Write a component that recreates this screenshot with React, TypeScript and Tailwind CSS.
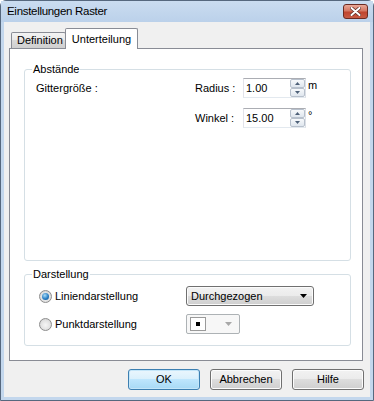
const btnFace =
  "bg-[linear-gradient(to_bottom,#f2f2f2_0%,#ebebeb_50%,#dddddd_50%,#cfcfcf_100%)]";

function Spinner() {
  return (
    <div className="flex w-[15px] flex-col">
      {["up", "down"].map((dir) => (
        <div
          key={dir}
          className="flex h-[9px] items-center justify-center rounded-[2px] border border-[#b7c0cc] bg-[linear-gradient(to_bottom,#f7f9fb,#dfe6ee)]"
        >
          <svg width="5" height="3" viewBox="0 0 5 3" aria-hidden>
            {dir === "up" ? (
              <path d="M0 3 L2.5 0 L5 3 Z" fill="#4d6078" />
            ) : (
              <path d="M0 0 L2.5 3 L5 0 Z" fill="#4d6078" />
            )}
          </svg>
        </div>
      ))}
    </div>
  );
}

function NumberField({ value, unit }: { value: string; unit: string }) {
  return (
    <div className="flex items-center">
      <div className="flex h-[20px] w-[63px] items-stretch border border-[#abadb3] border-b-[#e3e9ef] border-l-[#e2e3ea] border-r-[#dbdfe6] bg-white">
        <span className="flex flex-1 items-center pl-[2px]">{value}</span>
        <Spinner />
      </div>
      <span className="ml-[2px] self-start leading-[14px]">{unit}</span>
    </div>
  );
}

function Radio({ checked }: { checked?: boolean }) {
  return (
    <span className="flex h-[13px] w-[13px] items-center justify-center rounded-full border border-[#8d8d8d] bg-[radial-gradient(circle_at_50%_55%,#f6f6f6_0%,#e2e2e2_55%,#c4c4c4_100%)]">
      {checked ? (
        <span className="h-[7px] w-[7px] rounded-full bg-[radial-gradient(circle_at_40%_35%,#a8dcf8_0%,#2a7fc4_55%,#0c4a86_100%)]" />
      ) : null}
    </span>
  );
}

function Group({
  title,
  className,
  children,
}: {
  title: string;
  className: string;
  children: React.ReactNode;
}) {
  return (
    <div
      className={`relative w-[327px] rounded-[3px] border border-[#d5dfe5] ${className}`}
    >
      <span className="absolute -top-[7px] left-[7px] bg-white px-[1px] leading-[13px]">
        {title}
      </span>
      {children}
    </div>
  );
}

function DialogButton({ label, primary }: { label: string; primary?: boolean }) {
  return (
    <button
      type="button"
      className={
        primary
          ? "flex h-[21px] w-[72px] items-center justify-center rounded-[3px] border border-[#3c7fb1] bg-[linear-gradient(to_bottom,#eaf6fd_0%,#d9f0fc_50%,#bee6fd_50%,#a7d9f5_100%)] shadow-[inset_0_0_0_1px_#c4e6f9]"
          : `flex h-[21px] w-[72px] items-center justify-center rounded-[3px] border border-[#707070] ${btnFace} shadow-[inset_0_0_0_1px_#fcfcfc]`
      }
    >
      {label}
    </button>
  );
}

export default function App() {
  return (
    <div className="h-[401px] w-[374px] bg-white font-['Liberation_Sans',Arial,sans-serif] text-[11px] text-black">
      <div className="flex h-full flex-col rounded-t-[6px] border border-[#56687e] bg-[#c3d7ed] px-[3px] pb-[3px]">
        {/* title bar */}
        <div className="-mx-[3px] flex h-[21px] items-start justify-between bg-[linear-gradient(to_bottom,#cadcf0,#bbd1ea)] pl-[6px] pr-[5px]">
          <span className="mt-[4px] text-[11.5px] leading-[13px] tracking-[-0.3px]">
            Einstellungen Raster
          </span>
          <div className="mt-[3px] flex h-[15px] w-[25px] items-center justify-center rounded-[3px] border border-[#6b2b22] bg-[linear-gradient(to_bottom,#eaa897_0%,#d47763_45%,#c0452f_55%,#c75b45_100%)]">
            <svg width="11" height="9" viewBox="0 0 11 9" aria-hidden>
              <path
                d="M1.5 1 L9.5 8 M9.5 1 L1.5 8"
                stroke="#5b2a22"
                strokeWidth="3.4"
                strokeLinecap="round"
              />
              <path
                d="M1.5 1 L9.5 8 M9.5 1 L1.5 8"
                stroke="#ffffff"
                strokeWidth="2"
                strokeLinecap="round"
              />
            </svg>
          </div>
        </div>

        {/* client area */}
        <div className="flex flex-1 flex-col bg-[#f0f0f0] pl-[5px] pt-[6px]">
          {/* tabs */}
          <div className="flex h-[20px] items-end pl-[2px]">
            <div className="flex h-[16px] w-[55px] items-center rounded-t-[2px] border border-b-0 border-[#898c95] bg-[linear-gradient(to_bottom,#f3f3f3_0%,#e8e8e8_50%,#d9d9d9_50%,#cfcfcf_100%)] pl-[5px]">
              Definition
            </div>
            <div className="relative z-10 -mb-[1px] -ml-[1px] flex h-[21px] w-[73px] items-center justify-center rounded-t-[2px] border border-b-0 border-[#898c95] bg-white">
              Unterteilung
            </div>
          </div>

          {/* tab panel */}
          <div className="h-[313px] w-[354px] border border-[#898c95] bg-white pl-[14px] pt-[20px]">
            <Group title="Abstände" className="h-[192px] pl-[11px] pt-[8px]">
              <div className="flex h-[20px] items-center">
                <span className="w-[159px]">Gittergröße :</span>
                <span className="w-[48px]">Radius :</span>
                <NumberField value="1.00" unit="m" />
              </div>
              <div className="mt-[10px] flex h-[20px] items-center">
                <span className="w-[159px]" />
                <span className="w-[48px]">Winkel :</span>
                <NumberField value="15.00" unit="°" />
              </div>
            </Group>

            <Group title="Darstellung" className="mt-[13px] h-[72px] pl-[14px] pt-[11px]">
              <div className="flex h-[20px] items-center">
                <div className="flex w-[147px] items-center gap-[3px]">
                  <Radio checked />
                  <span>Liniendarstellung</span>
                </div>
                <div
                  className={`flex h-[20px] w-[128px] items-center justify-between rounded-[3px] border border-[#707070] ${btnFace} pl-[4px] pr-[6px] shadow-[inset_0_0_0_1px_#fbfbfb]`}
                >
                  <span>Durchgezogen</span>
                  <svg width="7" height="4" viewBox="0 0 7 4" aria-hidden>
                    <path d="M0 0 L7 0 L3.5 4 Z" fill="#000" />
                  </svg>
                </div>
              </div>
              <div className="mt-[8px] flex h-[20px] items-center">
                <div className="flex w-[147px] items-center gap-[3px]">
                  <Radio />
                  <span>Punktdarstellung</span>
                </div>
                <div className="flex h-[20px] w-[54px] items-center justify-between rounded-[2px] border border-[#adb2b5] bg-[#f7f7f7] pl-[3px] pr-[7px]">
                  <div className="flex h-[14px] w-[16px] items-center justify-center border border-[#9a9a9a] bg-white">
                    <span className="h-[4px] w-[4px] bg-black" />
                  </div>
                  <svg width="7" height="4" viewBox="0 0 7 4" aria-hidden>
                    <path d="M0 0 L7 0 L3.5 4 Z" fill="#a8a8a8" />
                  </svg>
                </div>
              </div>
            </Group>
          </div>

          {/* buttons */}
          <div className="mt-[8px] flex justify-end gap-[10px] pr-[6px]">
            <DialogButton label="OK" primary />
            <DialogButton label="Abbrechen" />
            <DialogButton label="Hilfe" />
          </div>
        </div>
      </div>
    </div>
  );
}
